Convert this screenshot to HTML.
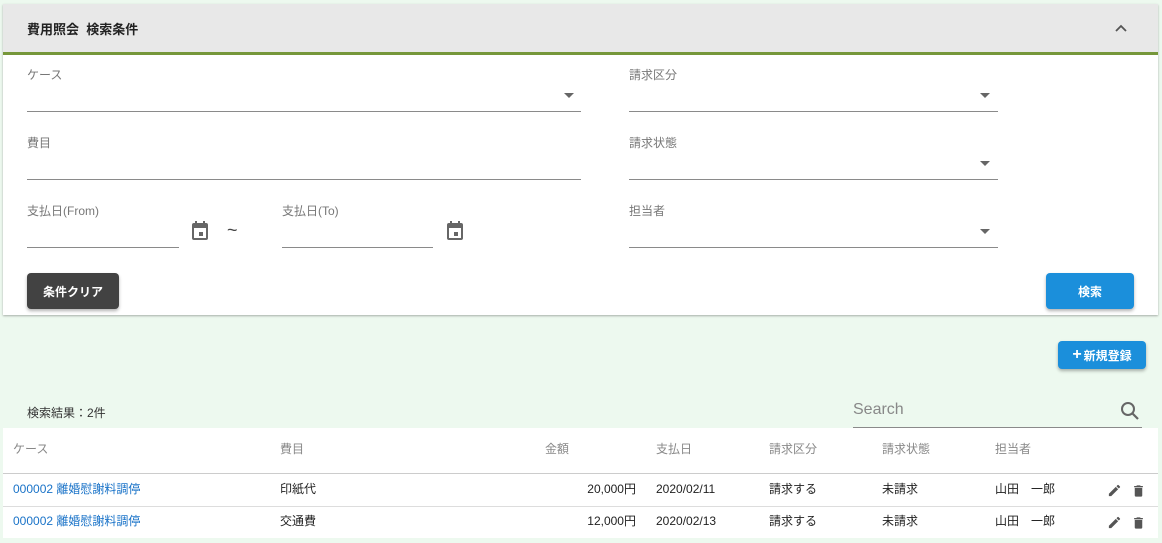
<!DOCTYPE html>
<html><head><meta charset="utf-8"><style>
*{margin:0;padding:0;box-sizing:border-box}
body{width:1162px;height:543px;background:#edf9ef;font-family:"Liberation Sans","Noto Sans CJK JP",sans-serif;position:relative;overflow:hidden;font-size:12px;color:#222}
.a{position:absolute}
.panel{left:3px;top:4px;width:1155px;height:311px;background:#fff;box-shadow:0 1px 2px rgba(0,0,0,.3)}
.hdr{left:3px;top:4px;width:1155px;height:51px;background:#e8e8e8;border-bottom:3px solid #76973a}
.lbl{color:#777;font-size:12px}
.line{height:1px;background:#8a8a8a}
.tri{width:0;height:0;border-left:5px solid transparent;border-right:5px solid transparent;border-top:5px solid #666}
.btn{border-radius:4px;color:#fff;font-weight:bold;font-size:12px;display:flex;align-items:center;justify-content:center;box-shadow:0 2px 3px rgba(0,0,0,.3)}
.th{color:#888;font-size:12px;line-height:16px}
.td{font-size:12px;color:#222;line-height:16px;height:16px;display:flex;align-items:center}
.lk{color:#1a73c8}
</style></head><body>
<div class="a panel"></div>
<div class="a hdr"></div>
<div class="a" style="left:27px;top:19px;font-weight:bold;font-size:13px;color:#222">費用照会&nbsp;&nbsp;検索条件</div>
<svg class="a" style="left:1114px;top:23px" width="14" height="10" viewBox="0 0 14 10"><path d="M2 8 L7 3 L12 8" fill="none" stroke="#555" stroke-width="1.8"/></svg>

<div class="a lbl" style="left:27px;top:66px">ケース</div>
<div class="a tri" style="left:564px;top:93px"></div>
<div class="a line" style="left:27px;top:111px;width:554px"></div>
<div class="a lbl" style="left:27px;top:134px">費目</div>
<div class="a line" style="left:27px;top:179px;width:554px"></div>
<div class="a lbl" style="left:27px;top:202px">支払日(From)</div>
<div class="a line" style="left:27px;top:247px;width:152px"></div>
<svg class="a" style="left:190px;top:220px" width="20" height="22" viewBox="0 0 20 22"><rect x="2" y="3" width="16" height="17" rx="2" fill="#666"/><rect x="4" y="8" width="12" height="10" fill="#fff"/><rect x="5" y="1" width="2" height="4" fill="#666"/><rect x="13" y="1" width="2" height="4" fill="#666"/><rect x="9" y="12" width="4" height="4" fill="#666"/></svg>
<div class="a" style="left:227px;top:220px;font-size:18px;color:#444">~</div>
<div class="a lbl" style="left:282px;top:202px">支払日(To)</div>
<div class="a line" style="left:282px;top:247px;width:151px"></div>
<svg class="a" style="left:445px;top:220px" width="20" height="22" viewBox="0 0 20 22"><rect x="2" y="3" width="16" height="17" rx="2" fill="#666"/><rect x="4" y="8" width="12" height="10" fill="#fff"/><rect x="5" y="1" width="2" height="4" fill="#666"/><rect x="13" y="1" width="2" height="4" fill="#666"/><rect x="9" y="12" width="4" height="4" fill="#666"/></svg>

<div class="a lbl" style="left:629px;top:66px">請求区分</div>
<div class="a tri" style="left:980px;top:93px"></div>
<div class="a line" style="left:629px;top:111px;width:369px"></div>
<div class="a lbl" style="left:629px;top:134px">請求状態</div>
<div class="a tri" style="left:980px;top:161px"></div>
<div class="a line" style="left:629px;top:179px;width:369px"></div>
<div class="a lbl" style="left:629px;top:202px">担当者</div>
<div class="a tri" style="left:980px;top:229px"></div>
<div class="a line" style="left:629px;top:247px;width:369px"></div>

<div class="a btn" style="left:27px;top:273px;width:92px;height:36px;background:#424242">条件クリア</div>
<div class="a btn" style="left:1046px;top:273px;width:88px;height:36px;background:#1b8fdb">検索</div>
<div class="a btn" style="left:1058px;top:341px;width:88px;height:28px;background:#1b8fdb"><span style="font-size:16px;margin-right:2px">+</span>新規登録</div>

<div class="a" style="left:27px;top:404px;font-size:12px;color:#333">検索結果：2件</div>
<div class="a" style="left:853px;top:401px;font-size:16px;color:#888">Search</div>
<svg class="a" style="left:1120px;top:401px" width="20" height="20" viewBox="0 0 20 20"><circle cx="8" cy="8" r="6" fill="none" stroke="#666" stroke-width="2"/><path d="M12.5 12.5 L18 18" stroke="#666" stroke-width="2.2"/></svg>
<div class="a line" style="left:853px;top:427px;width:289px"></div>

<div class="a" style="left:3px;top:428px;width:1155px;height:110px;background:#fff"></div>
<div class="a" style="left:3px;top:473px;width:1155px;height:1px;background:#ccc"></div>
<div class="a" style="left:3px;top:506px;width:1155px;height:1px;background:#ddd"></div>
<div class="a th" style="left:13px;top:441px">ケース</div>
<div class="a th" style="left:280px;top:441px">費目</div>
<div class="a th" style="left:545px;top:441px">金額</div>
<div class="a th" style="left:656px;top:441px">支払日</div>
<div class="a th" style="left:769px;top:441px">請求区分</div>
<div class="a th" style="left:882px;top:441px">請求状態</div>
<div class="a th" style="left:995px;top:441px">担当者</div>

<div class="a td lk" style="left:13px;top:481px">000002 離婚慰謝料調停</div>
<div class="a td" style="left:280px;top:481px">印紙代</div>
<div class="a td" style="left:536px;top:481px;width:100px;justify-content:flex-end">20,000円</div>
<div class="a td" style="left:656px;top:481px">2020/02/11</div>
<div class="a td" style="left:769px;top:481px">請求する</div>
<div class="a td" style="left:882px;top:481px">未請求</div>
<div class="a td" style="left:995px;top:481px">山田　一郎</div>

<div class="a td lk" style="left:13px;top:513px">000002 離婚慰謝料調停</div>
<div class="a td" style="left:280px;top:513px">交通費</div>
<div class="a td" style="left:536px;top:513px;width:100px;justify-content:flex-end">12,000円</div>
<div class="a td" style="left:656px;top:513px">2020/02/13</div>
<div class="a td" style="left:769px;top:513px">請求する</div>
<div class="a td" style="left:882px;top:513px">未請求</div>
<div class="a td" style="left:995px;top:513px">山田　一郎</div>

<svg class="a" style="left:1107px;top:483px" width="15" height="15" viewBox="0 0 24 24"><path d="M3 17.25V21h3.75L17.81 9.94l-3.75-3.75L3 17.25zM20.71 7.04a1 1 0 000-1.41l-2.34-2.34a1 1 0 00-1.41 0l-1.83 1.83 3.75 3.75 1.83-1.83z" fill="#555"/></svg>
<svg class="a" style="left:1131px;top:483px" width="15" height="16" viewBox="0 0 24 24"><path d="M6 19a2 2 0 002 2h8a2 2 0 002-2V7H6v12zM19 4h-3.5l-1-1h-5l-1 1H5v2h14V4z" fill="#555"/></svg>
<svg class="a" style="left:1107px;top:515px" width="15" height="15" viewBox="0 0 24 24"><path d="M3 17.25V21h3.75L17.81 9.94l-3.75-3.75L3 17.25zM20.71 7.04a1 1 0 000-1.41l-2.34-2.34a1 1 0 00-1.41 0l-1.83 1.83 3.75 3.75 1.83-1.83z" fill="#555"/></svg>
<svg class="a" style="left:1131px;top:515px" width="15" height="16" viewBox="0 0 24 24"><path d="M6 19a2 2 0 002 2h8a2 2 0 002-2V7H6v12zM19 4h-3.5l-1-1h-5l-1 1H5v2h14V4z" fill="#555"/></svg>
</body></html>
